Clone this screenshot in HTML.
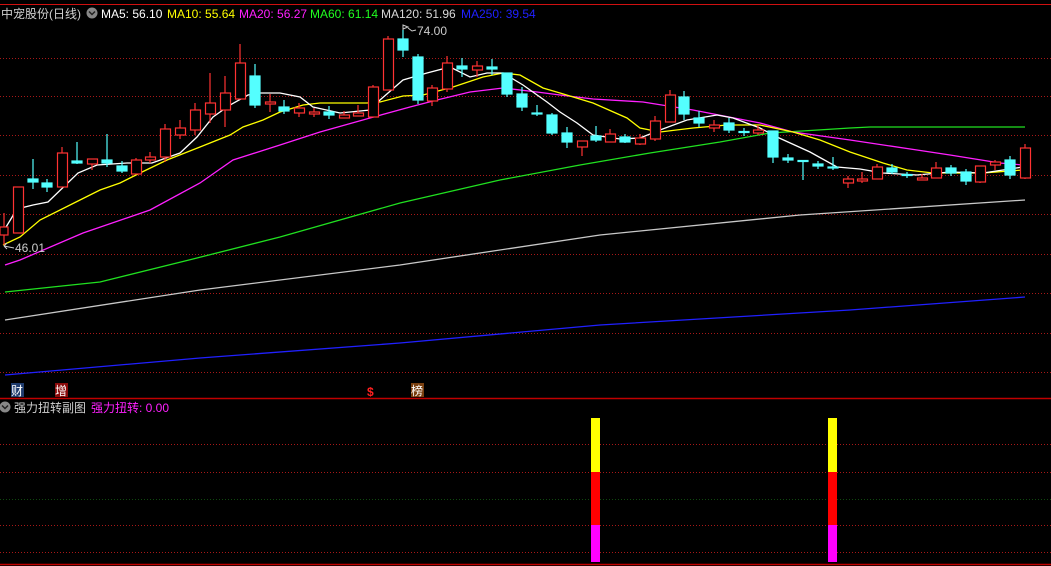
<!DOCTYPE html>
<html><head><meta charset="utf-8"><style>
html,body{margin:0;padding:0;background:#000;width:1051px;height:566px;overflow:hidden}
svg{display:block}
text{font-family:"Liberation Sans","Noto Sans CJK SC",sans-serif;font-size:12px}
</style></head><body>
<svg width="1051" height="566" viewBox="0 0 1051 566" xmlns="http://www.w3.org/2000/svg">
<rect width="1051" height="566" fill="#000"/>
<line x1="0" y1="4.5" x2="1051" y2="4.5" stroke="#d01010" stroke-width="1"/>
<line x1="0" y1="398.5" x2="1051" y2="398.5" stroke="#c00000" stroke-width="1.5"/>
<line x1="0" y1="564.5" x2="1051" y2="564.5" stroke="#c00000" stroke-width="1.5"/>
<g stroke="#a81818" stroke-width="1" stroke-dasharray="1,2">
<line x1="0" y1="58.5" x2="1051" y2="58.5"/>
<line x1="0" y1="96.5" x2="1051" y2="96.5"/>
<line x1="0" y1="135.5" x2="1051" y2="135.5"/>
<line x1="0" y1="175.5" x2="1051" y2="175.5"/>
<line x1="0" y1="214.5" x2="1051" y2="214.5"/>
<line x1="0" y1="254.5" x2="1051" y2="254.5"/>
<line x1="0" y1="293.5" x2="1051" y2="293.5"/>
<line x1="0" y1="333.5" x2="1051" y2="333.5"/>
<line x1="0" y1="372.5" x2="1051" y2="372.5"/>
<line x1="0" y1="444.5" x2="1051" y2="444.5"/>
<line x1="0" y1="472.5" x2="1051" y2="472.5"/>
<line x1="0" y1="525.5" x2="1051" y2="525.5"/>
<line x1="0" y1="552.5" x2="1051" y2="552.5"/>
</g>
<line x1="0" y1="499.5" x2="1051" y2="499.5" stroke="#0f4a0f" stroke-dasharray="1,2"/>

<polyline fill="none" stroke="#2020ff" stroke-width="1.3" points="5,375 200,358 400,343 600,325 850,310 1025,297"/>
<polyline fill="none" stroke="#c8c8c8" stroke-width="1.3" points="5,320 200,290 400,265 600,235 800,215 1025,200"/>
<polyline fill="none" stroke="#20e020" stroke-width="1.3" points="5,292 100,282 193,259 280,237 400,203 500,180 580,165 650,153 720,142 770,133 850,128 870,127 1025,127"/>
<polyline fill="none" stroke="#ff20ff" stroke-width="1.3" points="5,265 20,260 83,233 150,210 200,183 233,160 280,145 320,132 370,118 410,107 437,100 470,92 503,88 537,92 560,95 593,99 643,102 693,110 760,123 793,132 850,140 917,150 950,155 1000,163 1023,165"/>
<polyline fill="none" stroke="#ffff00" stroke-width="1.3" points="3,245 20,237 40,220 80,200 100,190 120,183 140,173 167,160 200,147 230,135 243,127 263,120 280,112 303,105 320,103 367,103 380,102 403,96 423,95 453,87 483,77 503,73 520,75 543,88 560,93 593,103 627,118 640,128 660,132 693,128 727,125 760,125 793,132 820,140 850,152 883,163 907,170 933,173 983,173 1023,170"/>
<polyline fill="none" stroke="#ffffff" stroke-width="1.3" points="3,232 17,209 33,205 48,202 78,173 97,165 127,163 152,163 180,153 197,137 213,117 230,105 248,95 260,93 280,93 300,97 313,107 340,113 370,110 380,100 403,80 427,73 450,67 470,77 487,73 503,73 523,85 547,102 560,112 577,123 593,135 620,139 640,138 660,130 687,120 717,115 733,118 760,128 777,137 810,152 837,167 860,169 883,173 917,175 950,172 983,173 1003,170 1023,167"/>

<g stroke="#ff3232" stroke-width="1.2" fill="#000">
<line x1="4" y1="213" x2="4" y2="245"/><rect x="0" y="227" width="8" height="8"/>
<line x1="18" y1="187" x2="18" y2="233"/><rect x="13.5" y="187" width="10" height="46"/>
<line x1="62" y1="147" x2="62" y2="187"/><rect x="57.5" y="153" width="10" height="34"/>
<line x1="92" y1="159" x2="92" y2="170"/><rect x="87.5" y="159" width="10" height="5"/>
<line x1="136" y1="158" x2="136" y2="174"/><rect x="131.5" y="160" width="10" height="14"/>
<line x1="150" y1="152" x2="150" y2="163"/><rect x="145.5" y="157" width="10" height="3"/>
<line x1="165" y1="124" x2="165" y2="162"/><rect x="160.5" y="129" width="10" height="28"/>
<line x1="180" y1="120" x2="180" y2="139"/><rect x="175.5" y="128" width="10" height="7"/>
<line x1="195" y1="103" x2="195" y2="135"/><rect x="190.5" y="110" width="10" height="20"/>
<line x1="210" y1="73" x2="210" y2="123"/><rect x="205.5" y="103" width="10" height="11"/>
<line x1="225" y1="76" x2="225" y2="127"/><rect x="220.5" y="93" width="10" height="17"/>
<line x1="240" y1="44" x2="240" y2="99"/><rect x="235.5" y="63" width="10" height="36"/>
<line x1="270" y1="94" x2="270" y2="112"/><rect x="265.5" y="102" width="10" height="2"/>
<line x1="299" y1="103" x2="299" y2="117"/><rect x="294.5" y="108" width="10" height="5"/>
<line x1="314" y1="108" x2="314" y2="117"/><rect x="309.5" y="112" width="10" height="2"/>
<line x1="344" y1="111" x2="344" y2="118"/><rect x="339.5" y="115" width="10" height="3"/>
<line x1="358" y1="105" x2="358" y2="116"/><rect x="353.5" y="113" width="10" height="3"/>
<line x1="373" y1="85" x2="373" y2="117"/><rect x="368.5" y="87" width="10" height="30"/>
<line x1="388" y1="36" x2="388" y2="90"/><rect x="383.5" y="39" width="10" height="51"/>
<line x1="432" y1="85" x2="432" y2="106"/><rect x="427.5" y="88" width="10" height="13"/>
<line x1="447" y1="56" x2="447" y2="92"/><rect x="442.5" y="63" width="10" height="26"/>
<line x1="477" y1="61" x2="477" y2="77"/><rect x="472.5" y="66" width="10" height="4"/>
<line x1="582" y1="141" x2="582" y2="156"/><rect x="577.5" y="141" width="10" height="6"/>
<line x1="610" y1="129" x2="610" y2="142"/><rect x="605.5" y="134" width="10" height="8"/>
<line x1="640" y1="134" x2="640" y2="145"/><rect x="635.5" y="138" width="10" height="6"/>
<line x1="655" y1="116" x2="655" y2="141"/><rect x="650.5" y="121" width="10" height="18"/>
<line x1="670" y1="90" x2="670" y2="122"/><rect x="665.5" y="95" width="10" height="27"/>
<line x1="714" y1="120" x2="714" y2="132"/><rect x="709.5" y="125" width="10" height="3"/>
<line x1="758" y1="125" x2="758" y2="135"/><rect x="753.5" y="130" width="10" height="3"/>
<line x1="848" y1="176" x2="848" y2="188"/><rect x="843.5" y="179" width="10" height="4"/>
<line x1="862" y1="172" x2="862" y2="183"/><rect x="857.5" y="179" width="10" height="2"/>
<line x1="877" y1="164" x2="877" y2="179"/><rect x="872.5" y="167" width="10" height="12"/>
<line x1="922" y1="174" x2="922" y2="180"/><rect x="917.5" y="178" width="10" height="2"/>
<line x1="936" y1="162" x2="936" y2="178"/><rect x="931.5" y="168" width="10" height="10"/>
<line x1="980" y1="166" x2="980" y2="183"/><rect x="975.5" y="166" width="10" height="16"/>
<line x1="995" y1="160" x2="995" y2="170"/><rect x="990.5" y="162" width="10" height="3"/>
<line x1="1025" y1="144" x2="1025" y2="179"/><rect x="1020.5" y="148" width="10" height="30"/>
</g>
<g stroke="#54ffff" stroke-width="1.2" fill="#54ffff">
<line x1="33" y1="159" x2="33" y2="189"/><rect x="28" y="179" width="10" height="3"/>
<line x1="47" y1="179" x2="47" y2="192"/><rect x="42" y="183" width="10" height="4"/>
<line x1="77" y1="142" x2="77" y2="164"/><rect x="72" y="161" width="10" height="2"/>
<line x1="107" y1="134" x2="107" y2="167"/><rect x="102" y="160" width="10" height="3"/>
<line x1="122" y1="161" x2="122" y2="173"/><rect x="117" y="166" width="10" height="5"/>
<line x1="255" y1="64" x2="255" y2="108"/><rect x="250" y="76" width="10" height="29"/>
<line x1="284" y1="100" x2="284" y2="114"/><rect x="279" y="107" width="10" height="4"/>
<line x1="329" y1="106" x2="329" y2="119"/><rect x="324" y="112" width="10" height="3"/>
<line x1="403" y1="30" x2="403" y2="57"/><rect x="398" y="39" width="10" height="11"/>
<line x1="418" y1="54" x2="418" y2="104"/><rect x="413" y="57" width="10" height="43"/>
<line x1="462" y1="58" x2="462" y2="77"/><rect x="457" y="66" width="10" height="3"/>
<line x1="492" y1="59" x2="492" y2="75"/><rect x="487" y="67" width="10" height="2"/>
<line x1="507" y1="73" x2="507" y2="97"/><rect x="502" y="73" width="10" height="21"/>
<line x1="522" y1="87" x2="522" y2="111"/><rect x="517" y="94" width="10" height="13"/>
<line x1="537" y1="105" x2="537" y2="116"/><rect x="532" y="113" width="10" height="1"/>
<line x1="552" y1="113" x2="552" y2="135"/><rect x="547" y="115" width="10" height="18"/>
<line x1="567" y1="127" x2="567" y2="148"/><rect x="562" y="133" width="10" height="9"/>
<line x1="596" y1="126" x2="596" y2="142"/><rect x="591" y="136" width="10" height="4"/>
<line x1="625" y1="134" x2="625" y2="143"/><rect x="620" y="137" width="10" height="5"/>
<line x1="684" y1="91" x2="684" y2="120"/><rect x="679" y="97" width="10" height="17"/>
<line x1="699" y1="111" x2="699" y2="127"/><rect x="694" y="118" width="10" height="5"/>
<line x1="729" y1="118" x2="729" y2="133"/><rect x="724" y="123" width="10" height="7"/>
<line x1="744" y1="128" x2="744" y2="136"/><rect x="739" y="131.5" width="10" height="1"/>
<line x1="773" y1="131" x2="773" y2="163"/><rect x="768" y="131" width="10" height="26"/>
<line x1="788" y1="154" x2="788" y2="163"/><rect x="783" y="158" width="10" height="2"/>
<line x1="803" y1="160" x2="803" y2="180"/><rect x="798" y="160.5" width="10" height="1"/>
<line x1="818" y1="161" x2="818" y2="169"/><rect x="813" y="164" width="10" height="2"/>
<line x1="833" y1="157" x2="833" y2="170"/><rect x="828" y="167" width="10" height="1"/>
<line x1="892" y1="164" x2="892" y2="174"/><rect x="887" y="168" width="10" height="4"/>
<line x1="907" y1="172" x2="907" y2="178"/><rect x="902" y="174.5" width="10" height="1"/>
<line x1="951" y1="165" x2="951" y2="176"/><rect x="946" y="168" width="10" height="5"/>
<line x1="966" y1="169" x2="966" y2="185"/><rect x="961" y="172" width="10" height="9"/>
<line x1="1010" y1="156" x2="1010" y2="179"/><rect x="1005" y="160" width="10" height="15"/>
</g>

<polyline points="403,30 403,25 408,27 403,29" fill="none" stroke="#ccc" stroke-width="1"/>
<path d="M408,28 L412,31 L416,30" fill="none" stroke="#ccc"/>
<text x="417" y="35" fill="#cccccc" font-size="12">74.00</text>
<path d="M4,246 L14,248 M4,246 L7,243 M4,246 L7,249" stroke="#ccc" fill="none"/>
<text x="15" y="252" fill="#cccccc" font-size="12">46.01</text>

<text x="1" y="18" fill="#d0d0d0" font-size="13">中宠股份(日线)</text>
<circle cx="92" cy="13" r="5.5" fill="#888"/>
<path d="M89,11.5 L92,14.5 L95,11.5" stroke="#222" stroke-width="1.5" fill="none"/>
<text x="101" y="18" fill="#ffffff">MA5: 56.10</text>
<text x="167" y="18" fill="#ffff00">MA10: 55.64</text>
<text x="239" y="18" fill="#ff20ff">MA20: 56.27</text>
<text x="310" y="18" fill="#20ff20">MA60: 61.14</text>
<text x="381" y="18" fill="#d8d8d8">MA120: 51.96</text>
<text x="461" y="18" fill="#2020ff">MA250: 39.54</text>

<rect x="11" y="383" width="13" height="14" fill="#1f3c6e"/>
<text x="11" y="395" fill="#fff" font-size="12">财</text>
<rect x="55" y="383" width="13" height="14" fill="#8a0a0a"/>
<text x="55" y="395" fill="#fff" font-size="12">增</text>
<text x="367" y="396" fill="#ff2020" font-size="12" font-weight="bold">$</text>
<rect x="411" y="383" width="13" height="14" fill="#7a4010"/>
<text x="411" y="395" fill="#fff" font-size="12">榜</text>

<circle cx="5" cy="407" r="5.5" fill="#888"/>
<path d="M2,405.5 L5,408.5 L8,405.5" stroke="#222" stroke-width="1.5" fill="none"/>
<text x="14" y="412" fill="#d0d0d0" font-size="13">强力扭转副图</text>
<text x="91" y="412" fill="#ff20ff" font-size="13">强力扭转: 0.00</text>

<rect x="591" y="418" width="9" height="54" fill="#ffff00"/>
<rect x="591" y="472" width="9" height="53" fill="#ff0000"/>
<rect x="591" y="525" width="9" height="37" fill="#ff00ff"/>
<rect x="828" y="418" width="9" height="54" fill="#ffff00"/>
<rect x="828" y="472" width="9" height="53" fill="#ff0000"/>
<rect x="828" y="525" width="9" height="37" fill="#ff00ff"/>
</svg>
</body></html>
